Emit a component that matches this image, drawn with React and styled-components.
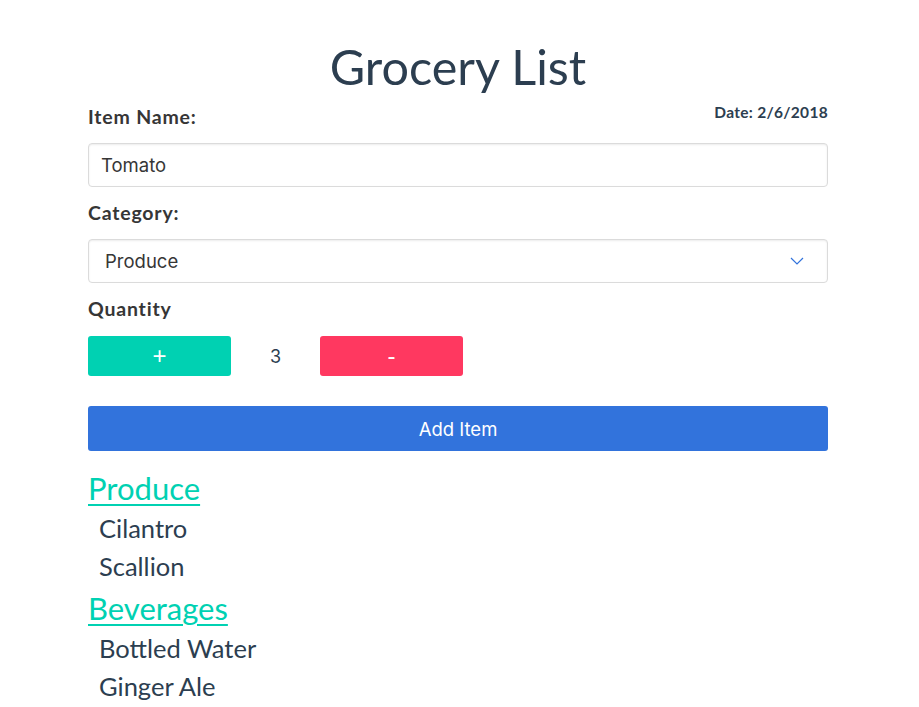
import React from "react";
import styled, { createGlobalStyle } from "styled-components";

const Global = createGlobalStyle`
  html, body { margin: 0; padding: 0; background: #fff; }
  body { font-family: Lato, "Noto Sans", sans-serif; color: #2c3e50; }
  * { box-sizing: border-box; }
`;

const Page = styled.div`
  width: 740px;
  margin-left: 88px;
  padding-top: 36px;
`;

const Title = styled.h1`
  margin: 0;
  text-align: center;
  font-size: 48.5px;
  font-weight: 400;
  line-height: 60px;
  color: #2c3e50;
`;

const TopRow = styled.div`
  display: flex;
  justify-content: space-between;
  align-items: flex-start;
  margin-top: 9px;
`;

const Label = styled.div`
  font-size: 19.5px;
  font-weight: 700;
  letter-spacing: 0.8px;
  color: #363636;
  line-height: 24px;
  margin-top: ${(p) => p.$mt || 0}px;
`;

const DateText = styled.div`
  font-size: 15.5px;
  font-weight: 700;
  letter-spacing: 0.3px;
  color: #2c3e50;
  line-height: 18px;
  margin-top: -2px;
`;

const Field = styled.div`
  position: relative;
  height: 44px;
  margin-top: ${(p) => p.$mt || 0}px;
  border: 1px solid #dbdbdb;
  border-radius: 4px;
  box-shadow: inset 0 1px 2px rgba(10, 10, 10, 0.08);
  display: flex;
  align-items: center;
  padding-left: ${(p) => p.$pl || 12}px;
  font-family: Inter, "Liberation Sans", sans-serif;
  font-size: 18.5px;
  color: #363636;
  background: #fff;
`;

const Chevron = styled.svg`
  position: absolute;
  right: 23px;
  top: 50%;
  margin-top: -4px;
`;

const QtyRow = styled.div`
  display: flex;
  align-items: center;
  margin-top: 15px;
`;

const QtyButton = styled.div`
  width: 143px;
  height: 40px;
  border-radius: 3px;
  background: ${(p) => p.$bg};
  color: #fff;
  font-size: 24px;
  display: flex;
  align-items: center;
  justify-content: center;
  font-family: "Liberation Sans", sans-serif;
`;

const Count = styled.div`
  width: 89px;
  text-align: center;
  font-family: Inter, "Liberation Sans", sans-serif;
  font-size: 18px;
  color: #2c3e50;
`;

const AddButton = styled.div`
  margin-top: 30px;
  height: 45px;
  border-radius: 3px;
  background: #3273dc;
  color: #fff;
  font-family: Inter, "Liberation Sans", sans-serif;
  font-size: 18.5px;
  display: flex;
  align-items: center;
  justify-content: center;
`;

const Group = styled.div`
  margin-top: ${(p) => (p.$first ? 16 : 2)}px;
`;

const Category = styled.a`
  display: inline-block;
  font-size: 31px;
  line-height: 42px;
  color: #00d1b2;
  text-decoration: underline;
  text-underline-offset: 4px;
  text-decoration-thickness: 2px;
`;

const Item = styled.div`
  padding-left: 11px;
  font-size: 25.5px;
  line-height: 38px;
  color: #2c3e50;
`;

const groups = [
  { name: "Produce", items: ["Cilantro", "Scallion"] },
  { name: "Beverages", items: ["Bottled Water", "Ginger Ale"] },
];

export default function App() {
  return (
    <Page>
      <Global />
      <Title>Grocery List</Title>
      <TopRow>
        <Label>Item Name:</Label>
        <DateText>Date: 2/6/2018</DateText>
      </TopRow>
      <Field $mt={14}>Tomato</Field>
      <Label $mt={14}>Category:</Label>
      <Field $mt={14} $pl={16}>
        Produce
        <Chevron width="14" height="8" viewBox="0 0 14 8">
          <path d="M1 1 L7 7 L13 1" fill="none" stroke="#3273dc" strokeWidth="1.2" />
        </Chevron>
      </Field>
      <Label $mt={14}>Quantity</Label>
      <QtyRow>
        <QtyButton $bg="#00d1b2">+</QtyButton>
        <Count>3</Count>
        <QtyButton $bg="#ff3860">-</QtyButton>
      </QtyRow>
      <AddButton>Add Item</AddButton>
      {groups.map((g, i) => (
        <Group key={g.name} $first={i === 0}>
          <Category>{g.name}</Category>
          {g.items.map((it) => (
            <Item key={it}>{it}</Item>
          ))}
        </Group>
      ))}
    </Page>
  );
}
